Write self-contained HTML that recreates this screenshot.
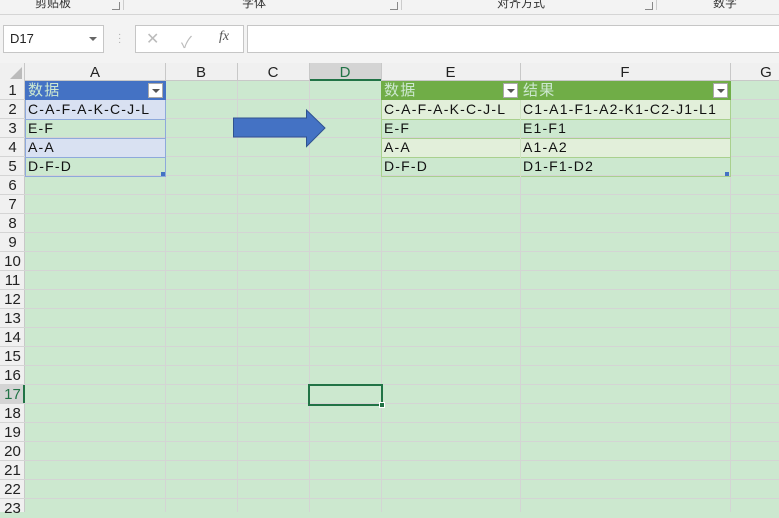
<!DOCTYPE html><html><head><meta charset="utf-8"><style>
*{margin:0;padding:0;box-sizing:border-box}
body{width:779px;height:512px;overflow:hidden;background:#cce8cf;position:relative;font-family:"Liberation Sans","Noto Sans CJK SC",sans-serif;}
.a{position:absolute}
.t{font-size:14px;color:#111;line-height:19px;padding-left:3px;white-space:nowrap;letter-spacing:1.2px}
.ch{font-size:15px;color:#222;text-align:center;line-height:19px}
.rh{font-size:15px;color:#222;text-align:center;width:25px;left:0;line-height:19px}
.dd{width:15px;height:15px;background:#fff;border:1px solid #aaa}
.dd:after{content:"";position:absolute;left:3px;top:5px;border-left:4px solid transparent;border-right:4px solid transparent;border-top:4px solid #555}
</style></head><body>
<div class="a" style="left:0;top:0;width:779px;height:63px;background:#f3f3f3"></div>
<div class="a" style="left:0;top:14px;width:779px;height:1px;background:#d5d5d5"></div>
<div class="a" style="top:-6px;left:35px;font-size:12px;color:#333">剪贴板</div>
<div class="a" style="top:-6px;left:242px;font-size:12px;color:#333">字体</div>
<div class="a" style="top:-6px;left:497px;font-size:12px;color:#333">对齐方式</div>
<div class="a" style="top:-6px;left:713px;font-size:12px;color:#333">数字</div>
<div class="a" style="left:123px;top:0;width:1px;height:10px;background:#ccc"></div>
<div class="a" style="left:401px;top:0;width:1px;height:10px;background:#ccc"></div>
<div class="a" style="left:656px;top:0;width:1px;height:10px;background:#ccc"></div>
<div class="a" style="left:112px;top:2px;width:8px;height:8px;border:1px solid #888;border-top:none;border-left:none"></div>
<div class="a" style="left:390px;top:2px;width:8px;height:8px;border:1px solid #888;border-top:none;border-left:none"></div>
<div class="a" style="left:645px;top:2px;width:8px;height:8px;border:1px solid #888;border-top:none;border-left:none"></div>
<div class="a" style="left:3px;top:25px;width:101px;height:28px;background:#fff;border:1px solid #c6c6c6"></div>
<div class="a" style="left:10px;top:31px;font-size:13px;color:#222">D17</div>
<div class="a" style="left:89px;top:37px;border-left:4px solid transparent;border-right:4px solid transparent;border-top:4px solid #666"></div>
<div class="a" style="left:118px;top:33px;color:#aaa;font-size:10px;line-height:4px">·<br>·<br>·</div>
<div class="a" style="left:135px;top:25px;width:109px;height:28px;background:#fff;border:1px solid #c6c6c6"></div>
<div class="a" style="left:146px;top:29px;font-size:16px;color:#bbb">✕</div>
<div class="a" style="left:181px;top:29px;font-size:16px;color:#bbb">✓</div>
<div class="a" style="left:219px;top:29px;font-size:14px;color:#555;font-style:italic;font-family:'Liberation Serif',serif">fx</div>
<div class="a" style="left:247px;top:25px;width:540px;height:28px;background:#fff;border:1px solid #c6c6c6"></div>
<div class="a" style="left:0;top:63px;width:779px;height:18px;background:#f0f0f0;border-bottom:1px solid #c8c8c8"></div>
<div class="a" style="left:0;top:63px;width:25px;height:449px;background:#f0f0f0;border-right:1px solid #c8c8c8"></div>
<div class="a" style="left:10px;top:67px;border-left:12px solid transparent;border-bottom:12px solid #bbb"></div>
<div class="a" style="left:309px;top:63px;width:72px;height:18px;background:#d4d4d4;border-bottom:2px solid #217346"></div>
<div class="a" style="left:0;top:385px;width:25px;height:19px;background:#d4d4d4;border-right:2px solid #217346"></div>
<div class="a ch" style="left:25px;top:63px;width:140px">A</div>
<div class="a ch" style="left:165px;top:63px;width:72px">B</div>
<div class="a ch" style="left:237px;top:63px;width:72px">C</div>
<div class="a ch" style="left:309px;top:63px;width:72px;color:#217346">D</div>
<div class="a ch" style="left:381px;top:63px;width:139px">E</div>
<div class="a ch" style="left:520px;top:63px;width:210px">F</div>
<div class="a ch" style="left:730px;top:63px;width:72px">G</div>
<svg class="a" style="left:0;top:63px" width="779" height="449">
<g stroke="#c8c8c8" stroke-width="1">
<line x1="165.5" y1="0" x2="165.5" y2="18"/><line x1="237.5" y1="0" x2="237.5" y2="18"/><line x1="309.5" y1="0" x2="309.5" y2="18"/><line x1="381.5" y1="0" x2="381.5" y2="18"/><line x1="520.5" y1="0" x2="520.5" y2="18"/><line x1="730.5" y1="0" x2="730.5" y2="18"/>
</g>
<g stroke="#d4d4d4" stroke-width="1">
<line x1="165.5" y1="18" x2="165.5" y2="449"/><line x1="237.5" y1="18" x2="237.5" y2="449"/><line x1="309.5" y1="18" x2="309.5" y2="449"/><line x1="381.5" y1="18" x2="381.5" y2="449"/><line x1="520.5" y1="18" x2="520.5" y2="449"/><line x1="730.5" y1="18" x2="730.5" y2="449"/>
<line x1="0" y1="36.5" x2="779" y2="36.5"/><line x1="0" y1="55.5" x2="779" y2="55.5"/><line x1="0" y1="74.5" x2="779" y2="74.5"/><line x1="0" y1="93.5" x2="779" y2="93.5"/><line x1="0" y1="112.5" x2="779" y2="112.5"/><line x1="0" y1="131.5" x2="779" y2="131.5"/><line x1="0" y1="150.5" x2="779" y2="150.5"/><line x1="0" y1="169.5" x2="779" y2="169.5"/><line x1="0" y1="188.5" x2="779" y2="188.5"/><line x1="0" y1="207.5" x2="779" y2="207.5"/><line x1="0" y1="226.5" x2="779" y2="226.5"/><line x1="0" y1="245.5" x2="779" y2="245.5"/><line x1="0" y1="264.5" x2="779" y2="264.5"/><line x1="0" y1="283.5" x2="779" y2="283.5"/><line x1="0" y1="302.5" x2="779" y2="302.5"/><line x1="0" y1="321.5" x2="779" y2="321.5"/><line x1="0" y1="340.5" x2="779" y2="340.5"/><line x1="0" y1="359.5" x2="779" y2="359.5"/><line x1="0" y1="378.5" x2="779" y2="378.5"/><line x1="0" y1="397.5" x2="779" y2="397.5"/><line x1="0" y1="416.5" x2="779" y2="416.5"/><line x1="0" y1="435.5" x2="779" y2="435.5"/>
</g></svg>
<div class="a rh" style="top:81px">1</div><div class="a rh" style="top:100px">2</div><div class="a rh" style="top:119px">3</div><div class="a rh" style="top:138px">4</div><div class="a rh" style="top:157px">5</div><div class="a rh" style="top:176px">6</div><div class="a rh" style="top:195px">7</div><div class="a rh" style="top:214px">8</div><div class="a rh" style="top:233px">9</div><div class="a rh" style="top:252px">10</div><div class="a rh" style="top:271px">11</div><div class="a rh" style="top:290px">12</div><div class="a rh" style="top:309px">13</div><div class="a rh" style="top:328px">14</div><div class="a rh" style="top:347px">15</div><div class="a rh" style="top:366px">16</div><div class="a rh" style="top:385px;color:#217346">17</div><div class="a rh" style="top:404px">18</div><div class="a rh" style="top:423px">19</div><div class="a rh" style="top:442px">20</div><div class="a rh" style="top:461px">21</div><div class="a rh" style="top:480px">22</div><div class="a rh" style="top:499px">23</div>
<div class="a" style="left:25px;top:81px;width:141px;height:19px;background:#4472c4"></div>
<div class="a" style="left:25px;top:100px;width:141px;height:19px;background:#d9e1f2"></div>
<div class="a" style="left:25px;top:138px;width:141px;height:19px;background:#d9e1f2"></div>
<div class="a" style="left:25px;top:100px;width:141px;height:77px;border:1px solid #8ea9db;border-top:none"></div>
<div class="a" style="left:25px;top:119px;width:141px;height:1px;background:#8ea9db"></div>
<div class="a" style="left:25px;top:138px;width:141px;height:1px;background:#8ea9db"></div>
<div class="a" style="left:25px;top:157px;width:141px;height:1px;background:#8ea9db"></div>
<div class="a t" style="left:25px;top:81px;color:#cde8d0;font-size:15px">数据</div>
<div class="a dd" style="left:148px;top:83px"></div>
<div class="a t" style="left:25px;top:100px">C-A-F-A-K-C-J-L</div>
<div class="a t" style="left:25px;top:119px">E-F</div>
<div class="a t" style="left:25px;top:138px">A-A</div>
<div class="a t" style="left:25px;top:157px">D-F-D</div>
<div class="a" style="left:161px;top:172px;width:4px;height:4px;background:#4472c4"></div>
<div class="a" style="left:381px;top:81px;width:350px;height:19px;background:#70ad47"></div>
<div class="a" style="left:381px;top:100px;width:350px;height:19px;background:#e2efda"></div>
<div class="a" style="left:381px;top:138px;width:350px;height:19px;background:#e2efda"></div>
<div class="a" style="left:381px;top:100px;width:350px;height:77px;border:1px solid #a9d08e;border-top:none"></div>
<div class="a" style="left:381px;top:119px;width:350px;height:1px;background:#a9d08e"></div>
<div class="a" style="left:381px;top:138px;width:350px;height:1px;background:#a9d08e"></div>
<div class="a" style="left:381px;top:157px;width:350px;height:1px;background:#a9d08e"></div>
<div class="a" style="left:520px;top:100px;width:1px;height:77px;background:#cfe3c3"></div>
<div class="a t" style="left:381px;top:81px;color:#cde8d0;font-size:15px">数据</div>
<div class="a dd" style="left:503px;top:83px"></div>
<div class="a t" style="left:520px;top:81px;color:#cde8d0;font-size:15px">结果</div>
<div class="a dd" style="left:713px;top:83px"></div>
<div class="a t" style="left:381px;top:100px">C-A-F-A-K-C-J-L</div>
<div class="a t" style="left:381px;top:119px">E-F</div>
<div class="a t" style="left:381px;top:138px">A-A</div>
<div class="a t" style="left:381px;top:157px">D-F-D</div>
<div class="a t" style="left:520px;top:100px">C1-A1-F1-A2-K1-C2-J1-L1</div>
<div class="a t" style="left:520px;top:119px">E1-F1</div>
<div class="a t" style="left:520px;top:138px">A1-A2</div>
<div class="a t" style="left:520px;top:157px">D1-F1-D2</div>
<div class="a" style="left:725px;top:172px;width:4px;height:4px;background:#4472c4"></div>
<svg class="a" style="left:230px;top:105px" width="100" height="45"><polygon points="3.5,13 76.5,13 76.5,5 95,23 76.5,41.5 76.5,32 3.5,32" fill="#4472c4" stroke="#2f528f" stroke-width="1"/></svg>
<div class="a" style="left:308px;top:384px;width:75px;height:22px;border:2px solid #217346"></div>
<div class="a" style="left:379px;top:402px;width:6px;height:6px;background:#217346;border:1px solid #fff"></div>
</body></html>
